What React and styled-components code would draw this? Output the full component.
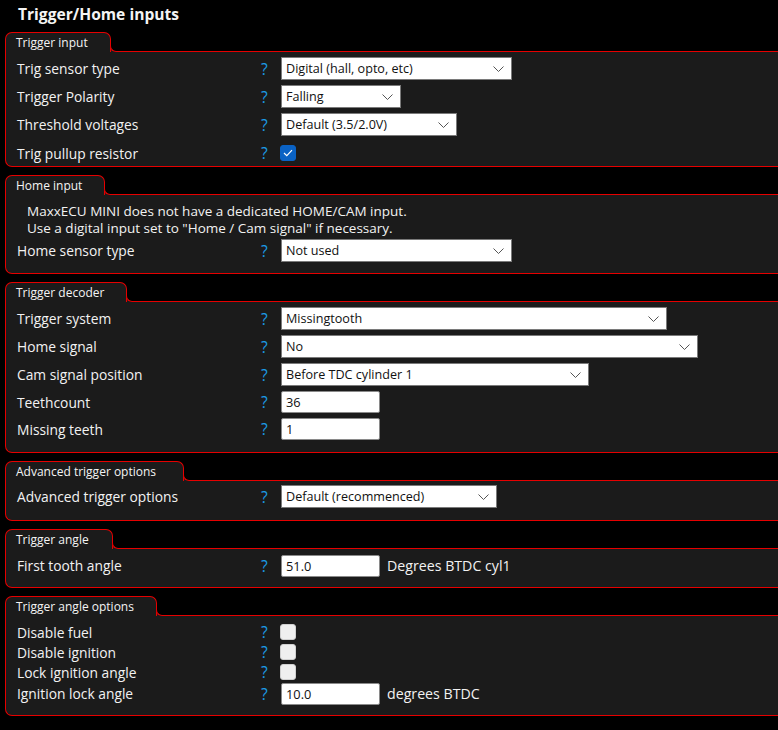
import React from "react";
import styled, { createGlobalStyle } from "styled-components";

const Global = createGlobalStyle`
  html, body { margin: 0; padding: 0; background: #000; overflow: hidden; }
  body { font-family: "Open Sans", "Noto Sans", "Liberation Sans", sans-serif; color: #f2f2f2; }
`;

const RED = "#e60000";
const PANEL = "#1b1b1b";

const Page = styled.div`
  width: 778px;
  height: 730px;
  overflow: hidden;
  padding-left: 5px;
  box-sizing: border-box;
`;

const Title = styled.h1`
  margin: 0;
  height: 32px;
  padding: 4px 0 0 13px;
  box-sizing: border-box;
  font-size: 15.6px;
  font-weight: 700;
  line-height: 20px;
  color: #f4f4f4;
`;

const Panel = styled.section`
  width: 820px;
  margin-bottom: ${(p) => p.$mb ?? 8}px;
`;

const TabRow = styled.div`
  display: flex;
  height: 20px;
  background: linear-gradient(to bottom, transparent 12px, ${PANEL} 12px);
`;

const Tab = styled.div`
  box-sizing: border-box;
  height: 20px;
  padding: 2px ${(p) => p.$pr ?? 22}px 0 10px;
  border: 1px solid ${RED};
  border-bottom: none;
  border-radius: 7px 7px 0 0;
  background: ${PANEL};
  font-size: 12px;
  line-height: 16px;
  color: #f4f4f4;
  white-space: nowrap;
`;

const TabFill = styled.div`
  flex: 1;
  align-self: flex-end;
  height: 8px;
  margin-left: -1px;
  border-left: 1px solid ${RED};
  border-bottom: 1px solid ${RED};
  border-bottom-left-radius: 6px;
  background: #000;
`;

const Body = styled.div`
  background: ${PANEL};
  border-left: 1px solid ${RED};
  border-bottom: 1px solid ${RED};
  border-bottom-left-radius: 7px;
  padding: ${(p) => p.$pt ?? 5}px 0 ${(p) => p.$pb ?? 12}px 11px;
  display: flex;
  flex-direction: column;
  gap: ${(p) => p.$gap ?? 5}px;
`;

const Info = styled.div`
  padding-left: 10px;
  font-size: 13.5px;
  line-height: 17px;
  color: #f2f2f2;
  margin-bottom: 2px;
`;

const Row = styled.div`
  display: grid;
  grid-template-columns: 241px 23px auto 1fr;
  align-items: center;
  min-height: ${(p) => p.$h ?? 23}px;
`;

const Label = styled.span`
  font-size: 13.8px;
  color: #f2f2f2;
  white-space: nowrap;
`;

const Help = styled.span`
  font-size: 15.5px;
  line-height: 16px;
  color: #1c9be6;
  padding-left: 3px;
`;

const SelectBox = styled.div`
  box-sizing: border-box;
  width: ${(p) => p.$w}px;
  height: 23px;
  background: #fff;
  border: 1px solid #7a7a7a;
  display: flex;
  align-items: center;
  justify-content: space-between;
  padding: 0 7px 0 4px;
  font-size: 12.6px;
  color: #111;
  white-space: nowrap;
`;

const TextInput = styled.div`
  box-sizing: border-box;
  width: 99px;
  height: 22px;
  background: #fff;
  border: 1px solid #8a8a8a;
  border-radius: 2px;
  display: flex;
  align-items: center;
  padding-left: 4px;
  font-size: 12.8px;
  color: #111;
`;

const Check = styled.div`
  box-sizing: border-box;
  width: 16px;
  height: 16px;
  border-radius: 3px;
  margin-left: -1px;
  background: ${(p) => (p.$on ? "#0a62c4" : "#efefef")};
  border: 1px solid ${(p) => (p.$on ? "#0a62c4" : "#d0d0d0")};
  display: flex;
  align-items: center;
  justify-content: center;
`;

const Control = styled.div`
  display: flex;
  align-items: center;
  gap: 7px;
`;

const Unit = styled.span`
  font-size: 14.2px;
  color: #f2f2f2;
`;

const Chevron = () => (
  <svg width="11" height="6" viewBox="0 0 11 6">
    <path d="M0.5 0.5 L5.5 5.5 L10.5 0.5" fill="none" stroke="#555" strokeWidth="1" />
  </svg>
);

const Select = ({ w, children }) => (
  <SelectBox $w={w}>
    <span>{children}</span>
    <Chevron />
  </SelectBox>
);

const Checkbox = ({ on }) => (
  <Check $on={on}>
    {on && (
      <svg width="10" height="8" viewBox="0 0 10 8">
        <path d="M1 4 L3.8 6.6 L9 1.2" fill="none" stroke="#fff" strokeWidth="1.2" />
      </svg>
    )}
  </Check>
);

const Field = ({ label, h, children }) => (
  <Row $h={h}>
    <Label>{label}</Label>
    <Help>?</Help>
    <Control>{children}</Control>
  </Row>
);

const Section = ({ title, pr, pt, pb, gap, mb, children }) => (
  <Panel $mb={mb}>
    <TabRow>
      <Tab $pr={pr}>{title}</Tab>
      <TabFill />
    </TabRow>
    <Body $pt={pt} $pb={pb} $gap={gap}>
      {children}
    </Body>
  </Panel>
);

export default function App() {
  return (
    <Page>
      <Global />
      <Title>Trigger/Home inputs</Title>

      <Section title="Trigger input" pb={1}>
        <Field label="Trig sensor type">
          <Select w={231}>Digital (hall, opto, etc)</Select>
        </Field>
        <Field label="Trigger Polarity">
          <Select w={120}>Falling</Select>
        </Field>
        <Field label="Threshold voltages">
          <Select w={176}>Default (3.5/2.0V)</Select>
        </Field>
        <Field label="Trig pullup resistor" h={24}>
          <Checkbox on />
        </Field>
      </Section>

      <Section title="Home input" pt={8} gap={0} pb={11}>
        <Info>
          MaxxECU MINI does not have a dedicated HOME/CAM input.
          <br />
          Use a digital input set to "Home / Cam signal" if necessary.
        </Info>
        <Field label="Home sensor type">
          <Select w={231}>Not used</Select>
        </Field>
      </Section>

      <Section title="Trigger decoder">
        <Field label="Trigger system">
          <Select w={386}>Missingtooth</Select>
        </Field>
        <Field label="Home signal">
          <Select w={417}>No</Select>
        </Field>
        <Field label="Cam signal position">
          <Select w={308}>Before TDC cylinder 1</Select>
        </Field>
        <Field label="Teethcount" h={22}>
          <TextInput>36</TextInput>
        </Field>
        <Field label="Missing teeth" h={22}>
          <TextInput>1</TextInput>
        </Field>
      </Section>

      <Section title="Advanced trigger options" pr={27} pt={4}>
        <Field label="Advanced trigger options">
          <Select w={216}>Default (recommenced)</Select>
        </Field>
      </Section>

      <Section title="Trigger angle" pr={23} pb={10}>
        <Field label="First tooth angle">
          <TextInput>51.0</TextInput>
          <Unit>Degrees BTDC cyl1</Unit>
        </Field>
      </Section>

      <Section title="Trigger angle options" pt={6} gap={0} pb={10}>
        <Field label="Disable fuel" h={20}>
          <Checkbox />
        </Field>
        <Field label="Disable ignition" h={20}>
          <Checkbox />
        </Field>
        <Field label="Lock ignition angle" h={20}>
          <Checkbox />
        </Field>
        <Field label="Ignition lock angle" h={23}>
          <TextInput>10.0</TextInput>
          <Unit>degrees BTDC</Unit>
        </Field>
      </Section>
    </Page>
  );
}
